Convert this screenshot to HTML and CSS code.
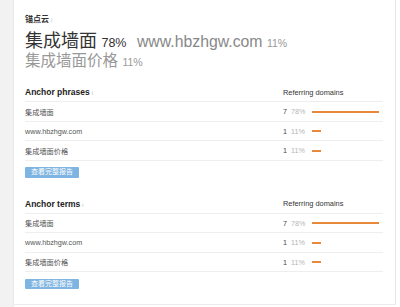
FILE: index.html
```html
<!doctype html>
<html>
    <head>
        <title>Anchors</title>
        <link rel="stylesheet" href="styles.css">
    </head>
    <body>
        <div class="side"></div>
        <main class="panel">
            <div class="brand">锚点云<span class="info">i</span></div>
            <div class="top-line">
                <span class="big">集成墙面</span>
                <span class="big-pct">78%</span>
                <span class="site">www.hbzhgw.com</span>
                <span class="small-pct">11%</span>
            </div>
            <div class="sub-line">
                <span class="sub">集成墙面价格</span>
                <span class="small-pct">11%</span>
            </div>

            <section class="block">
                <div class="row head">
                    <div class="label">Anchor phrases<span class="info">i</span></div>
                    <div class="stat">Referring domains</div>
                </div>
                <div class="row">
                    <div class="label">集成墙面</div>
                    <div class="stat"><span class="num">7</span><span class="pct">78%</span><span class="bar" style="width: 67px"></span></div>
                </div>
                <div class="row">
                    <div class="label">www.hbzhgw.com</div>
                    <div class="stat"><span class="num">1</span><span class="pct">11%</span><span class="bar" style="width: 9px"></span></div>
                </div>
                <div class="row">
                    <div class="label">集成墙面价格</div>
                    <div class="stat"><span class="num">1</span><span class="pct">11%</span><span class="bar" style="width: 9px"></span></div>
                </div>
                <button class="report">查看完整报告</button>
            </section>

            <section class="block">
                <div class="row head">
                    <div class="label">Anchor terms<span class="info">i</span></div>
                    <div class="stat">Referring domains</div>
                </div>
                <div class="row">
                    <div class="label">集成墙面</div>
                    <div class="stat"><span class="num">7</span><span class="pct">78%</span><span class="bar" style="width: 67px"></span></div>
                </div>
                <div class="row">
                    <div class="label">www.hbzhgw.com</div>
                    <div class="stat"><span class="num">1</span><span class="pct">11%</span><span class="bar" style="width: 9px"></span></div>
                </div>
                <div class="row">
                    <div class="label">集成墙面价格</div>
                    <div class="stat"><span class="num">1</span><span class="pct">11%</span><span class="bar" style="width: 9px"></span></div>
                </div>
                <button class="report">查看完整报告</button>
            </section>
        </main>
    </body>
</html>
```

FILE: styles.css
```css
* {
    box-sizing: border-box;
}

body {
    margin: 0;
    display: flex;
    height: 307px;
    overflow: hidden;
    background: #fff;
    font-family: "Liberation Sans", "Noto Sans CJK SC", sans-serif;
    color: #333;
}

.side {
    flex: none;
    width: 14px;
    background: #f2f2f2;
    border-right: 1px solid #e8e8e8;
}

.panel {
    flex: none;
    width: 382px;
    height: 305px;
    padding: 0 12px 0 11px;
    border-right: 1px solid #e6e6e6;
    border-bottom: 1px solid #ececec;
}

.brand {
    margin-top: 14px;
    height: 11px;
    font-size: 8px;
    line-height: 11px;
    font-weight: bold;
    color: #333;
}

.info {
    margin-left: 2px;
    font-size: 6px;
    font-weight: normal;
    color: #bbb;
}

.top-line {
    margin-top: 6px;
    height: 20px;
    line-height: 20px;
    white-space: nowrap;
}

.big {
    font-size: 18px;
    color: #333;
}

.big-pct {
    font-size: 12.5px;
    color: #333;
}

.site {
    font-size: 15.8px;
    color: #888;
    margin-left: 6px;
}

.small-pct {
    font-size: 10.5px;
    color: #999;
}

.sub-line {
    margin-top: 1px;
    height: 18px;
    line-height: 18px;
    white-space: nowrap;
}

.sub {
    font-size: 15.5px;
    color: #999;
}

.block {
    margin-top: 13px;
}

.block + .block {
    margin-top: 17px;
}

.row {
    display: flex;
    align-items: center;
    height: 19.5px;
    padding-top: 1px;
    border-bottom: 1px solid #eee;
    font-size: 7.2px;
    color: #555;
}

.row.head {
    height: 19px;
    padding-top: 0;
}

.head .label {
    font-size: 8.5px;
    font-weight: bold;
    color: #222;
}

.head .stat {
    font-size: 7.4px;
    color: #333;
}

.label {
    flex: 1;
}

.stat {
    width: 100px;
    display: flex;
    align-items: center;
}

.num {
    width: 8px;
    color: #444;
}

.pct {
    width: 21px;
    color: #b5b5b5;
}

.bar {
    height: 2px;
    background: #e8883b;
}

.report {
    display: block;
    margin-top: 6.5px;
    width: 54px;
    height: 10.5px;
    padding: 0;
    border: none;
    border-radius: 1px;
    background: #7db4e1;
    color: #fff;
    font-family: "Liberation Sans", "Noto Sans CJK SC", sans-serif;
    font-size: 7px;
    line-height: 10.5px;
}
```
